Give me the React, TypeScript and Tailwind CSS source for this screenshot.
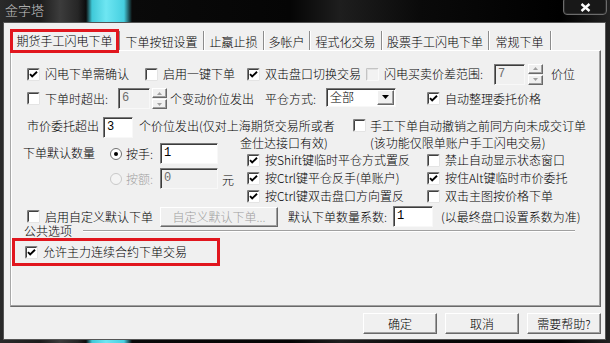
import type { ReactNode } from 'react'

// classic win32 3D edges
const sunken =
  'border border-t-[#7a7a7a] border-l-[#7a7a7a] border-r-[#f8f8f8] border-b-[#f8f8f8] shadow-[inset_1px_1px_0_#3c3c3c]'
const raised =
  'border border-t-white border-l-white border-r-[#696969] border-b-[#696969] shadow-[inset_-1px_-1px_0_#a0a0a0]'

function Box({ checked = false, disabled = false }: { checked?: boolean; disabled?: boolean }) {
  return (
    <svg width="13" height="13" viewBox="0 0 13 13" className="shrink-0">
      <rect x="0" y="0" width="13" height="13" fill={disabled ? '#f2f2f2' : '#fff'} />
      <path d="M0.5 12.5V0.5H12.5" fill="none" stroke={disabled ? '#c4c4c4' : '#808080'} />
      <path d="M1.5 11.5V1.5H11.5" fill="none" stroke={disabled ? '#e2e2e2' : '#404040'} />
      <path d="M0.5 12.5H12.5V0.5" fill="none" stroke={disabled ? '#fafafa' : '#e4e4e4'} />
      {checked && <path d="M3 6.2L5.2 8.5L10 3.8" fill="none" stroke="#000" strokeWidth="1.9" />}
    </svg>
  )
}

function Radio({ checked = false, disabled = false }: { checked?: boolean; disabled?: boolean }) {
  return (
    <svg width="12" height="12" viewBox="0 0 12 12" className="shrink-0">
      <circle cx="6" cy="6" r="5.5" fill={disabled ? '#f4f4f4' : '#fff'} stroke={disabled ? '#c8c8c8' : '#707070'} />
      {checked && <circle cx="6" cy="6" r="2" fill="#000" />}
    </svg>
  )
}

function Check({
  checked,
  disabled,
  w = '',
  children,
}: {
  checked?: boolean
  disabled?: boolean
  w?: string
  children: ReactNode
}) {
  return (
    <div className={`flex shrink-0 items-center gap-[5px] ${w}`}>
      <Box checked={checked} disabled={disabled} />
      <span className="whitespace-nowrap">{children}</span>
    </div>
  )
}

function Field({ value, w, disabled = false }: { value: string; w: string; disabled?: boolean }) {
  return (
    <div
      className={`${w} h-[21px] shrink-0 pl-[3px] font-['Liberation_Mono',monospace] text-[12px] leading-[18px] ${sunken} ${
        disabled ? 'bg-[#f0f0f0] text-[#6d6d6d]' : 'bg-white text-black'
      }`}
    >
      {value}
    </div>
  )
}

function Spin() {
  return (
    <div className="flex h-[21px] w-[15px] shrink-0 flex-col">
      <div className={`flex h-[10px] items-center justify-center bg-[#f0f0f0] ${raised}`}>
        <svg width="5" height="3" viewBox="0 0 5 3">
          <path d="M2.5 0L5 3H0Z" fill="#a0a0a0" />
        </svg>
      </div>
      <div className={`mt-[1px] flex h-[10px] items-center justify-center bg-[#f0f0f0] ${raised}`}>
        <svg width="5" height="3" viewBox="0 0 5 3">
          <path d="M0 0H5L2.5 3Z" fill="#a0a0a0" />
        </svg>
      </div>
    </div>
  )
}

const tabs = [
  { label: '下单按钮设置', w: 'w-[85px] border-l border-l-[#8c8c8c]' },
  { label: '止蠃止损', w: 'w-[60px]' },
  { label: '多帐户', w: 'w-[46px]' },
  { label: '程式化交易', w: 'w-[72px]' },
  { label: '股票手工闪电下单', w: 'w-[107px]' },
  { label: '常规下单', w: 'w-[62px]' },
]

export default function App() {
  return (
    <div className="flex h-[343px] w-[610px] flex-col overflow-hidden bg-[linear-gradient(90deg,#2a2a2a_0px,#1c1c1c_40px,#3c3c3c_60px,#262626_78px,#0c0c0c_86px,#3fc9d8_92px,#6ee6f2_106px,#45cfe0_124px,#0a0a0a_132px,#050505_290px,#1e1e1e_340px,#0a0a0a_420px,#000_560px,#222_610px)] font-['Noto_Sans_CJK_SC','Noto_Sans',sans-serif] text-[12px] font-light leading-[14px] text-black">
      {/* title bar */}
      <div className="flex h-[22px] shrink-0 items-start justify-between">
        <span className="pl-[5px] pt-[3px] text-[13px] text-[#c4c4c4]">金字塔</span>
        <div className="mr-[3px] -mt-[3px] flex h-[18px] w-[44px] items-center justify-center rounded-[4px] border border-[#6c6c6c] bg-[#181818] pt-[3px] shadow-[inset_0_0_0_1px_#2c2c2c]">
          <svg width="11" height="9" viewBox="0 0 11 9">
            <path d="M1.5 1L9.5 8M9.5 1L1.5 8" stroke="#fff" strokeWidth="2.4" />
          </svg>
        </div>
      </div>

      {/* dialog body */}
      <div className="ml-[3px] flex h-[318px] w-[603px] shrink-0 flex-col border border-[#555] bg-[#f0f0f0]">
        {/* tab strip */}
        <div className="mt-[4px] flex h-[23px] items-start pl-[6px]">
          <div className="relative z-10 mt-[2px] flex h-[24px] w-[109px] shrink-0 items-center justify-center border-[3px] border-[#e1161e] bg-[#f0f0f0]">
            期货手工闪电下单
          </div>
          {tabs.map((t) => (
            <div
              key={t.label}
              className={`${t.w} mt-[4px] h-[19px] shrink-0 border-r border-r-[#8c8c8c] pt-[4px] text-center shadow-[1px_0_0_#fff]`}
            >
              {t.label}
            </div>
          ))}
        </div>

        {/* tab page */}
        <div className="ml-[6px] flex h-[257px] w-[591px] flex-col border border-t-white border-l-[#a8a8a8] border-r-[#696969] border-b-[#696969] shadow-[inset_-1px_-1px_0_#a0a0a0,inset_1px_0_0_#fff]">
          {/* row 1 */}
          <div className="mt-[12px] flex h-[22px] items-center pl-[16px]">
            <Check checked w="w-[118px]">闪电下单需确认</Check>
            <Check w="w-[102px]">启用一键下单</Check>
            <Check checked w="w-[119px]">双击盘口切换交易</Check>
            <Check disabled w="w-[128px]">闪电买卖价差范围:</Check>
            <Field value="7" w="w-[31px]" disabled />
            <div className="ml-[3px]">
              <Spin />
            </div>
            <span className="ml-[8px]">价位</span>
          </div>

          {/* row 2 */}
          <div className="mt-[3px] flex h-[21px] items-center pl-[16px]">
            <Check w="w-[91px]">下单时超出:</Check>
            <Field value="6" w="w-[32px]" disabled />
            <div className="ml-[2px]">
              <Spin />
            </div>
            <span className="ml-[3px] w-[95px] shrink-0">个变动价位发出</span>
            <span className="w-[61px] shrink-0">平仓方式:</span>
            <div className={`-mt-[3px] flex h-[19px] w-[70px] shrink-0 items-center bg-white pl-[3px] ${sunken}`}>
              <span className="flex-1">全部</span>
              <div className={`mr-[1px] flex h-[15px] w-[17px] items-center justify-center bg-[#f0f0f0] ${raised}`}>
                <svg width="7" height="4" viewBox="0 0 7 4">
                  <path d="M0 0H7L3.5 4Z" fill="#000" />
                </svg>
              </div>
            </div>
            <div className="ml-[31px]">
              <Check checked>自动整理委托价格</Check>
            </div>
          </div>

          {/* row 3 */}
          <div className="mt-[8px] flex h-[34px] items-start pl-[16px] leading-[17px]">
            <span className="w-[76px] shrink-0">市价委托超出</span>
            <Field value="3" w="w-[30px]" />
            <div className="ml-[6px] w-[200px] shrink-0">
              <div className="whitespace-nowrap">个价位发出(仅对上海期货交易所或者</div>
              <div className="whitespace-nowrap pl-[101px]">金仕达接口有效)</div>
            </div>
            <div className="ml-[14px] flex items-start gap-[4px]">
              <div className="mt-[2px]">
                <Box />
              </div>
              <div>
                <div className="whitespace-nowrap">手工下单自动撤销之前同方向未成交订单</div>
                <div className="whitespace-nowrap">(该功能仅限单账户手工闪电交易)</div>
              </div>
            </div>
          </div>

          {/* row 4 */}
          <div className="-mt-[8px] flex items-start pl-[12px]">
            <span className="mt-[1px] w-[87px] shrink-0 leading-[17px]">下单默认数量</span>
            <div className="flex w-[137px] shrink-0 flex-col gap-[4px]">
              <div className="flex h-[21px] items-center">
                <div className="flex w-[50px] items-center gap-[4px]">
                  <Radio checked />
                  <span>按手:</span>
                </div>
                <Field value="1" w="w-[58px]" />
              </div>
              <div className="flex h-[21px] items-center">
                <div className="flex w-[50px] items-center gap-[4px] text-[#a0a0a0]">
                  <Radio disabled />
                  <span>按额:</span>
                </div>
                <Field value="0" w="w-[58px]" disabled />
                <span className="ml-[4px] mt-[3px]">元</span>
              </div>
            </div>
            <div className="mt-[8px] grid grid-cols-[180px_auto] grid-rows-[18px_18px_18px] items-center">
              <Check checked>按Shift键临时平仓方式置反</Check>
              <Check>禁止自动显示状态窗口</Check>
              <Check checked>按Ctrl键平仓反手(单账户)</Check>
              <Check checked>按住Alt键临时市价委托</Check>
              <Check checked>按Ctrl键双击盘口方向置反</Check>
              <Check>双击主图按价格下单</Check>
            </div>
          </div>

          {/* row 5 */}
          <div className="mt-[1px] flex h-[21px] items-center pl-[16px]">
            <Check w="w-[133px]">启用自定义默认下单</Check>
            <div className={`flex h-[20px] w-[118px] shrink-0 items-center justify-center bg-[#f0f0f0] text-[#a0a0a0] ${raised}`}>
              自定义默认下单...
            </div>
            <span className="ml-[10px] w-[105px] shrink-0 whitespace-nowrap">默认下单数量系数:</span>
            <Field value="1" w="w-[40px]" />
            <span className="ml-[8px] whitespace-nowrap">(以最终盘口设置系数为准)</span>
          </div>

          {/* 公共选项 group */}
          <div className="-mt-[3px] flex h-[14px] items-center pl-[12px]">
            <span className="w-[60px] shrink-0 pl-[1px]">公共选项</span>
            <div className="h-[2px] w-[492px] border-t border-b border-t-[#a0a0a0] border-b-white" />
          </div>
          <div className="ml-[1px] flex h-[28px] w-[208px] items-center gap-[5px] border-[3px] border-[#e1161e] pl-[10px]">
            <Box checked />
            <span className="whitespace-nowrap">允许主力连续合约下单交易</span>
          </div>
        </div>

        {/* dialog buttons */}
        <div className="mt-[6px] flex h-[21px] justify-end gap-[8px] pr-[4px]">
          {['确定', '取消', '需要帮助?'].map((b) => (
            <div key={b} className={`flex h-[21px] w-[74px] items-center justify-center bg-[#f0f0f0] ${raised}`}>
              {b}
            </div>
          ))}
        </div>
      </div>
    </div>
  )
}
